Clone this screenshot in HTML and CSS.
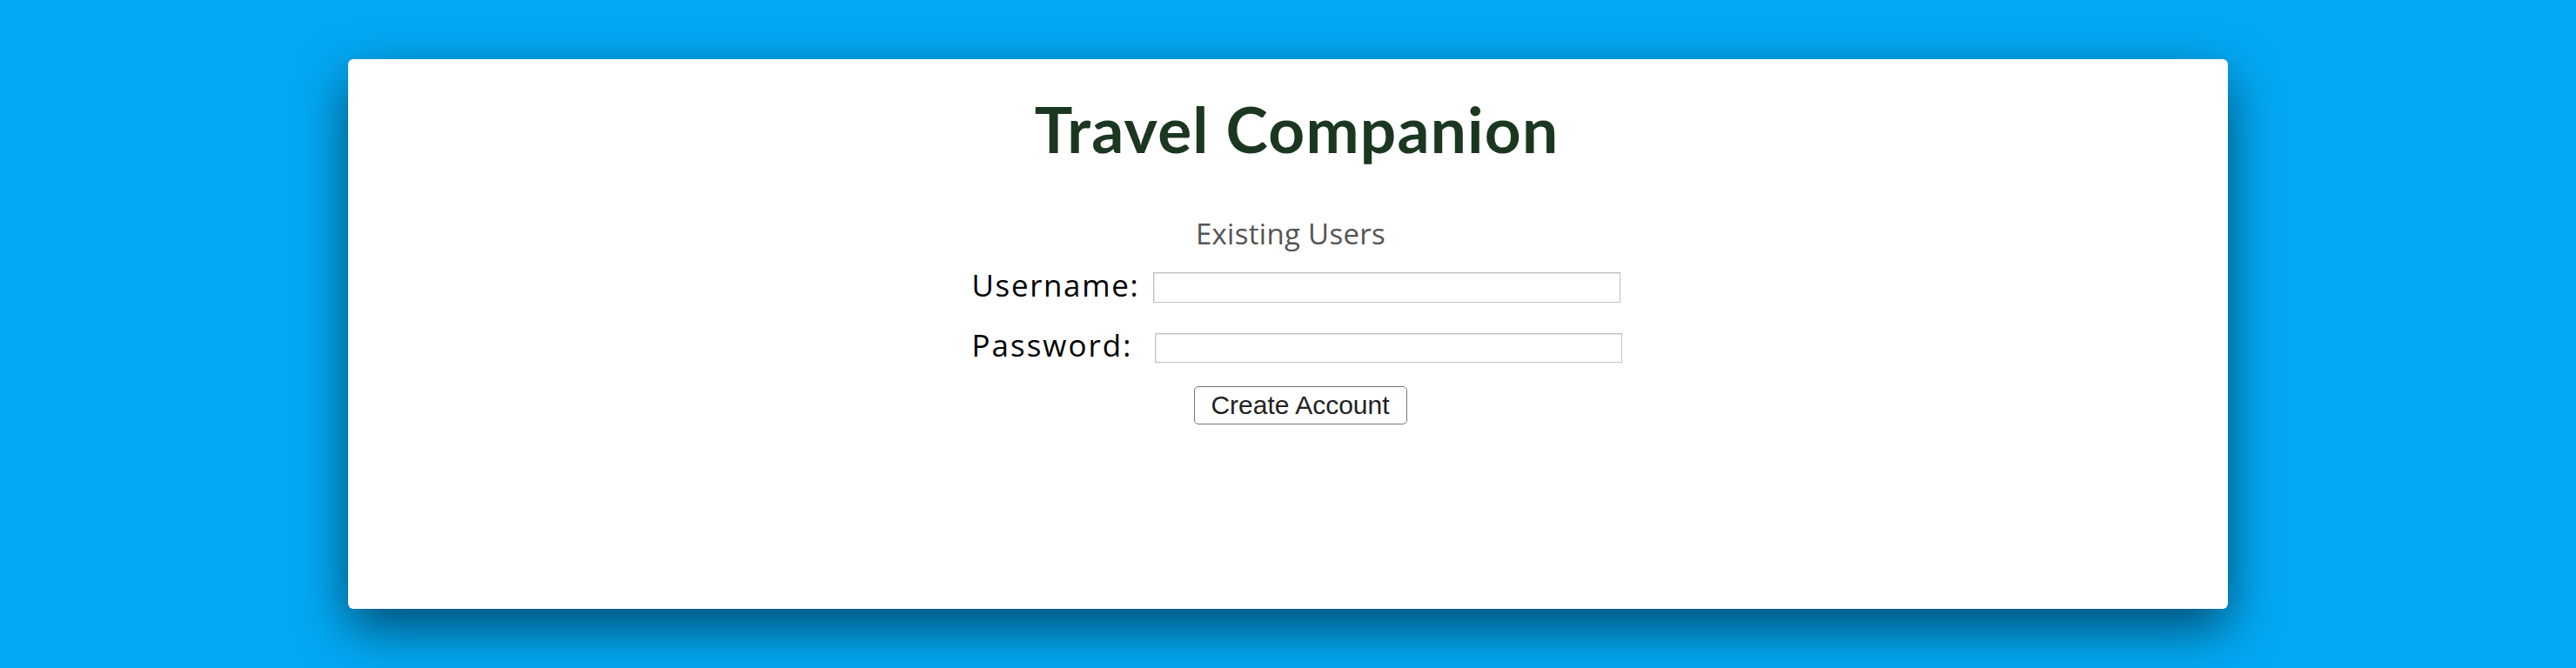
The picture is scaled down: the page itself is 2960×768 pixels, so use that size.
FILE: index.html
```html
<!DOCTYPE html>
<html lang="en">
<head>
<meta charset="utf-8">
<title>Travel Companion</title>
<link rel="stylesheet" href="styles.css">
</head>
<body>
  <main class="card">
    <h1 class="title">Travel Companion</h1>
    <form class="login">
      <p class="section-label">Existing Users</p>
      <div class="row">
        <label class="field-label" for="username">Username:</label>
        <input class="field" id="username" type="text">
      </div>
      <div class="row row-password">
        <label class="field-label" for="password">Password:</label>
        <input class="field" id="password" type="password">
      </div>
      <div class="actions">
        <button class="btn" type="button">Create Account</button>
      </div>
    </form>
  </main>
</body>
</html>
```

FILE: styles.css
```css
html, body {
  margin: 0;
  padding: 0;
}

body {
  background: #03a9f4;
  width: 2960px;
  height: 768px;
  overflow: hidden;
  padding: 68px 400px 0;
  box-sizing: border-box;
  font-family: "Open Sans", Lato, sans-serif;
}

.card {
  background: #ffffff;
  height: 632px;
  border-radius: 6px;
  box-shadow: 0 22px 60px rgba(0, 0, 0, 0.55);
  box-sizing: border-box;
  padding: 44px 0 0 20px;
}

.title {
  margin: 0;
  text-align: center;
  font-family: Lato, "Open Sans", sans-serif;
  font-size: 73px;
  line-height: 72px;
  font-weight: 700;
  color: #1b3720;
  letter-spacing: 1.2px;
}

.login {
  width: 747px;
  margin: 0 auto;
}

.section-label {
  margin: 65px 0 0 0;
  text-align: center;
  font-size: 33px;
  line-height: 40px;
  color: #555555;
  letter-spacing: 0.3px;
  padding-right: 14px;
}

.row {
  display: flex;
  align-items: center;
  margin-top: 24px;
  height: 35px;
}

.row-password {
  margin-top: 34px;
}

.field-label {
  font-size: 35px;
  line-height: 35px;
  color: #000000;
  letter-spacing: 1.6px;
  width: 208px;
  flex: none;
  margin-top: -6px;
}

.row-password .field-label {
  width: 210px;
  letter-spacing: 2px;
}

.field {
  width: 537px;
  height: 35px;
  box-sizing: border-box;
  border: 1px solid #c2c2c2;
  box-shadow: inset 1px 1px 0 #e6e6e6;
  padding: 0;
  margin: 0;
  background: #ffffff;
}

.row-password .field {
  height: 34px;
}

.actions {
  display: flex;
  justify-content: center;
  margin-top: 27px;
  padding-left: 8px;
}

.btn {
  width: 245px;
  height: 44px;
  box-sizing: border-box;
  border: 1px solid #767676;
  border-radius: 5px;
  background: #ffffff;
  color: #222222;
  font-family: "Liberation Sans", Arial, sans-serif;
  font-size: 30px;
  line-height: 1;
  padding: 0;
}
```
